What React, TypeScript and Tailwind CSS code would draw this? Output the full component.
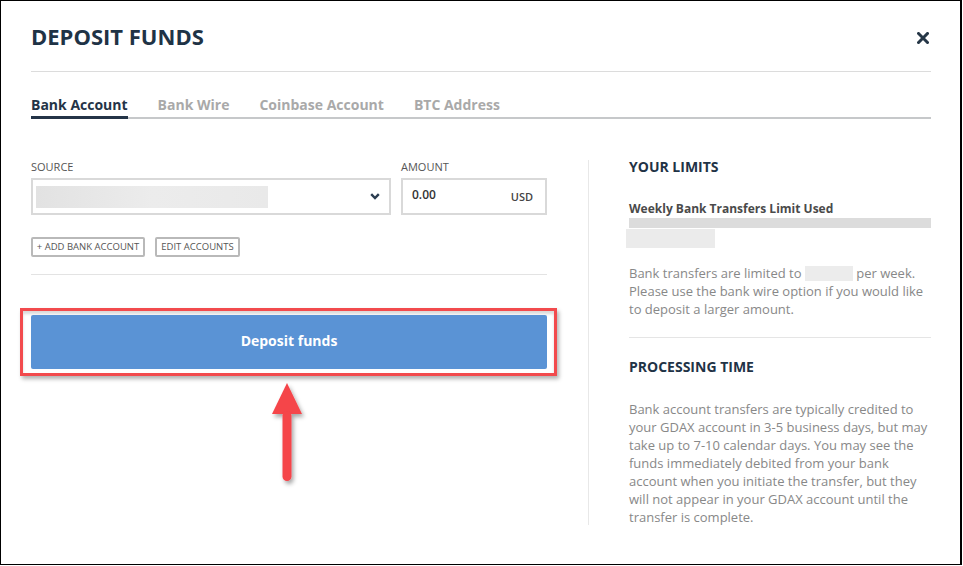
import React from "react";

const font = { fontFamily: '"Open Sans", "Liberation Sans", sans-serif' };

function CloseIcon() {
  return (
    <svg width="12" height="12" viewBox="0 0 12 12">
      <path d="M1.5 1.5 L10.5 10.5 M10.5 1.5 L1.5 10.5" stroke="#263747" strokeWidth="3" strokeLinecap="square" />
    </svg>
  );
}

function Chevron() {
  return (
    <svg width="10" height="7" viewBox="0 0 10 7">
      <path d="M1.2 1.2 L5 5 L8.8 1.2" stroke="#2b3d50" strokeWidth="2.4" fill="none" />
    </svg>
  );
}

function Arrow() {
  return (
    <svg width="44" height="104" viewBox="0 0 44 104" className="overflow-visible">
      <defs>
        <filter id="sh" x="-50%" y="-20%" width="200%" height="140%">
          <feDropShadow dx="2" dy="3" stdDeviation="2" floodColor="#000" floodOpacity="0.35" />
        </filter>
      </defs>
      <g filter="url(#sh)" fill="#f5444a">
        <polygon points="20,0 35,31 5,31" />
        <rect x="15.5" y="28" width="9" height="70" rx="4.5" />
      </g>
    </svg>
  );
}

export default function App() {
  return (
    <div className="w-[963px] h-[566px] bg-white" style={font}>
      <div className="w-[962px] h-[565px] border border-r-2 border-black pl-[30px] pt-[20px]">
        <div className="w-[900px]">
          {/* Header */}
          <div className="flex items-center justify-between">
            <h1 className="text-[22px] leading-[30px] font-bold text-[#1f3346]">DEPOSIT FUNDS</h1>
            <button className="mr-[2px] mt-[3px]"><CloseIcon /></button>
          </div>
          <div className="mt-[20px] border-t border-[#dcdcdc]" />

          {/* Tabs */}
          <div className="mt-[23px] flex gap-[30px] border-b-2 border-[#c6c8ca]">
            {["Bank Account", "Bank Wire", "Coinbase Account", "BTC Address"].map((t, i) => (
              <div
                key={t}
                className={`text-[14px] leading-[19px] font-bold pb-[2px] border-b-[3px] -mb-[2px] ${
                  i === 0 ? "border-[#243447] text-[#243447]" : "border-transparent text-[#a9a9a9]"
                }`}
              >
                {t}
              </div>
            ))}
          </div>

          {/* Body */}
          <div className="flex mt-[40px]">
            {/* Left column */}
            <div className="w-[516px] shrink-0">
              <div className="flex gap-[10px]">
                <div className="w-[360px]">
                  <div className="text-[11px] leading-[15px] text-[#555]">SOURCE</div>
                  <div className="mt-[4px] h-[37px] border-2 border-[#d9d9d9] flex items-center pl-[3px] pr-[9px]">
                    <div className="w-[232px] h-[22px] bg-gradient-to-r from-[#e2e2e2] via-[#ececec] to-[#e9e9e9]" />
                    <div className="flex-1" />
                    <Chevron />
                  </div>
                </div>
                <div className="w-[146px]">
                  <div className="text-[11px] leading-[15px] text-[#555]">AMOUNT</div>
                  <div className="mt-[4px] h-[37px] border-2 border-[#d9d9d9] flex items-center justify-between pl-[9px] pr-[12px]">
                    <span className="text-[12px] font-semibold text-[#333] -mt-[3px]">0.00</span>
                    <span className="text-[11px] font-semibold text-[#444] mt-[2px]">USD</span>
                  </div>
                </div>
              </div>

              <div className="mt-[22px] flex gap-[10px]">
                <button className="w-[114px] h-[20px] border-2 border-[#b9b9b9] rounded-[2px] text-[9.5px] leading-none text-[#555]">
                  + ADD BANK ACCOUNT
                </button>
                <button className="w-[85px] h-[20px] border-2 border-[#b9b9b9] rounded-[2px] text-[9.5px] leading-none text-[#555]">
                  EDIT ACCOUNTS
                </button>
              </div>

              <div className="mt-[17px] border-t border-[#e3e3e3]" />

              <div className="mt-[33px] -ml-[11px] w-[537px] border-[3px] border-[#f24a4d] pt-[4px] pb-[4px] pl-[8px] pr-[7px] shadow-[2px_3px_4px_rgba(0,0,0,0.3),inset_0_3px_3px_rgba(0,0,0,0.15)]">
                <button className="w-[516px] h-[54px] pb-[3px] rounded-[2px] bg-[#5a93d5] text-white text-[14px] font-bold">
                  Deposit funds
                </button>
              </div>

              <div className="mt-[7px] ml-[236px]">
                <Arrow />
              </div>
            </div>

            {/* Divider */}
            <div className="ml-[41px] mt-[1px] w-px h-[365px] bg-[#e8e8e8] shrink-0" />

            {/* Right column */}
            <div className="ml-[40px] -mt-[2px] w-[302px] shrink-0">
              <div className="text-[14px] leading-[19px] font-bold text-[#1f3346]">YOUR LIMITS</div>
              <div className="mt-[25px] text-[12px] leading-[16px] font-bold text-[#4a4a4a]">Weekly Bank Transfers Limit Used</div>
              <div className="mt-[1px] h-[10px] bg-[#dcdcdc]" />
              <div className="mt-[1px] -ml-[3px] w-[89px] h-[19px] bg-[#ebebeb]" />
              <p className="mt-[16px] text-[13px] leading-[18px] text-[#888]">
                Bank transfers are limited to <span className="inline-block align-[-3px] w-[48px] h-[15px] bg-[#ececec]" /> per week. Please use the bank wire option if you would like to deposit a larger amount.
              </p>
              <div className="mt-[19px] border-t border-[#e5e5e5]" />
              <div className="mt-[19px] text-[14px] leading-[19px] font-bold text-[#1f3346]">PROCESSING TIME</div>
              <p className="mt-[24px] text-[13px] leading-[18px] text-[#888]">
                Bank account transfers are typically credited to your GDAX account in 3-5 business days, but may take up to 7-10 calendar days. You may see the funds immediately debited from your bank account when you initiate the transfer, but they will not appear in your GDAX account until the transfer is complete.
              </p>
            </div>
          </div>
        </div>
      </div>
    </div>
  );
}
